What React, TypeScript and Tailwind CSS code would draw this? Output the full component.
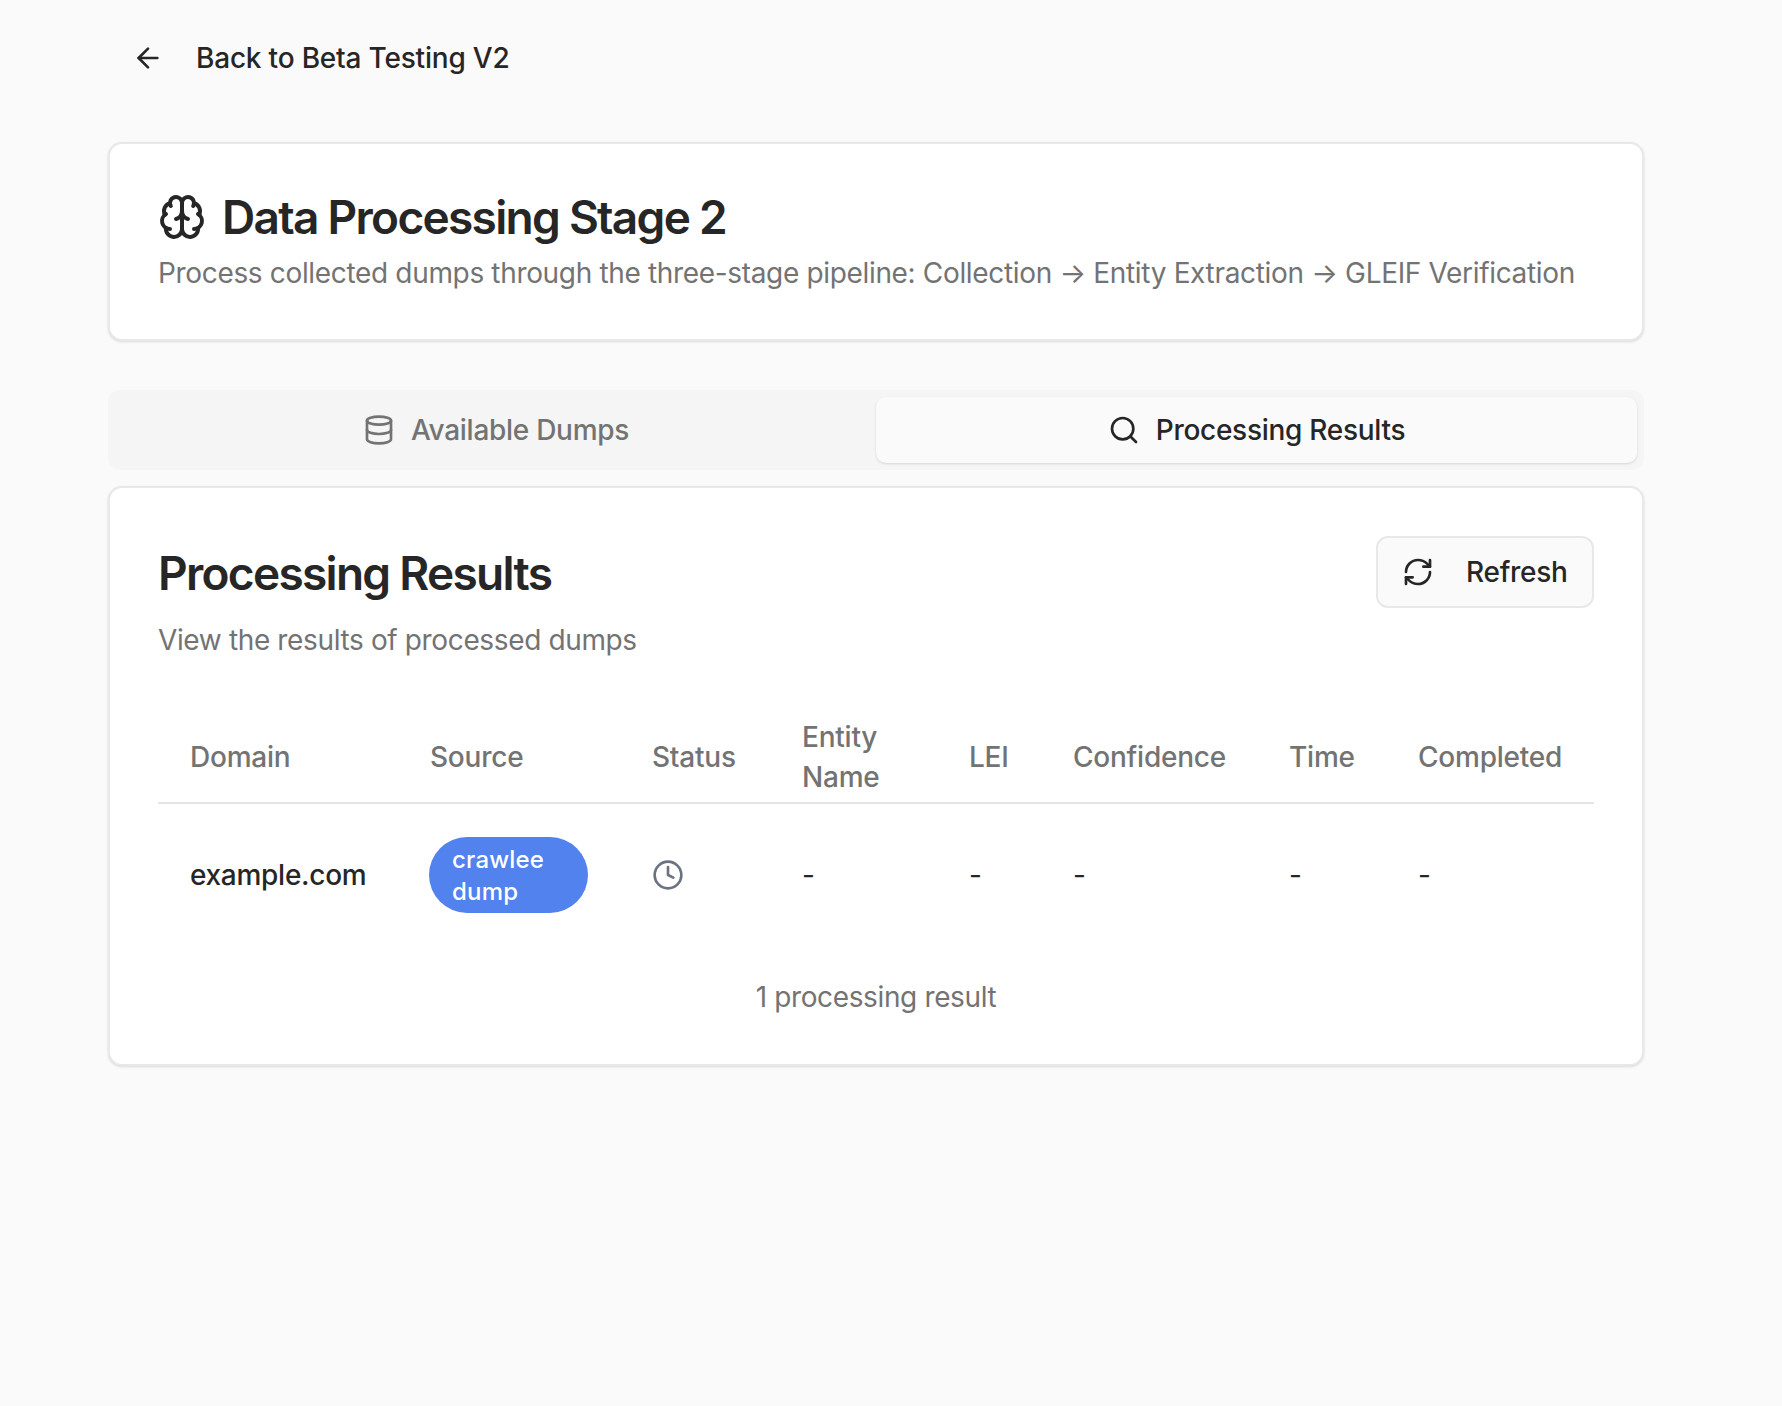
import { ArrowLeft, Brain, Clock, Database, RefreshCw, Search } from 'lucide-react'

const headers = ['Domain', 'Source', 'Status', 'Entity Name', 'LEI', 'Confidence', 'Time', 'Completed']
const widths = ['w-[240px]', 'w-[222px]', 'w-[150px]', 'w-[167px]', 'w-[104px]', 'w-[216px]', 'w-[129px]', 'w-[208px]']

const App = () => {
  return (
    <div className="min-h-[1406px] bg-[#fafafa] pl-[108px] pr-[138px] pt-[28px] font-['Inter',sans-serif] text-[#262626]">
      <a className="ml-[24px] flex h-[60px] items-center gap-[32px] text-[28px] font-medium tracking-[-0.007em]">
        <ArrowLeft className="h-[32px] w-[32px]" strokeWidth={2} />
        Back to Beta Testing V2
      </a>

      <div className="mt-[54px] h-[199px] rounded-[14px] border-2 border-[#e8e8e8] bg-white px-[48px] pt-[45px] shadow-sm">
        <div className="flex items-center gap-[16px]">
          <Brain className="h-[48px] w-[48px]" strokeWidth={2} />
          <h1 className="text-[46px] leading-[56px] font-semibold tracking-[-0.037em]">Data Processing Stage 2</h1>
        </div>
        <p className="mt-[6px] text-[28px] leading-[44px] tracking-[-0.012em] whitespace-nowrap text-[#737373]">
          Process collected dumps through the three-stage pipeline: Collection → Entity Extraction → GLEIF Verification
        </p>
      </div>

      <div className="mt-[49px] grid h-[80px] grid-cols-2 rounded-[12px] bg-[#f5f5f5] p-[7px]">
        <div className="flex items-center justify-center gap-[16px] pl-[1px] text-[28px] font-medium tracking-[-0.01em] text-[#737373]">
          <Database className="h-[32px] w-[32px]" />
          Available Dumps
        </div>
        <div className="flex items-center justify-center gap-[16px] rounded-[10px] bg-[#fafafa] text-[28px] font-medium tracking-[-0.01em] shadow-sm">
          <Search className="h-[32px] w-[32px]" />
          Processing Results
        </div>
      </div>

      <div className="mt-[16px] h-[580px] rounded-[14px] border-2 border-[#e8e8e8] bg-white px-[48px] pt-[48px] shadow-sm">
        <div className="flex items-start justify-between">
          <div>
            <h2 className="mt-[9px] text-[46px] leading-[56px] font-semibold tracking-[-0.037em]">Processing Results</h2>
            <p className="mt-[17px] text-[28px] leading-[44px] tracking-[-0.013em] text-[#737373]">View the results of processed dumps</p>
          </div>
          <button className="flex h-[72px] w-[218px] items-center gap-[32px] rounded-[12px] border-2 border-[#e8e8e8] bg-[#fafafa] pl-[24px] text-[28px] font-medium tracking-[-0.01em]">
            <RefreshCw className="h-[32px] w-[32px]" />
            Refresh
          </button>
        </div>

        <table className="mt-[49px] w-[1436px] table-fixed border-collapse">
          <colgroup>
            {widths.map((w) => (
              <col key={w} className={w} />
            ))}
          </colgroup>
          <thead>
            <tr className="h-[92px] border-b-2 border-[#e5e5e5]">
              {headers.map((h) => (
                <th key={h} className="px-[32px] text-left text-[28px] leading-[40px] font-medium tracking-[-0.008em] text-[#737373]">
                  {h}
                </th>
              ))}
            </tr>
          </thead>
          <tbody>
            <tr className="h-[142px] text-[28px] tracking-[-0.01em]">
              <td className="px-[32px] font-medium">example.com</td>
              <td className="px-[32px]">
                <span className="-ml-[1px] inline-block w-[159px] rounded-[38px] bg-[#5282ee] px-[23px] pt-[7px] pb-[5px] text-[24px] leading-[32px] font-medium tracking-[0.008em] text-white">
                  crawlee dump
                </span>
              </td>
              <td className="px-[32px]">
                <Clock className="h-[32px] w-[32px] text-[#6b7280]" />
              </td>
              <td className="px-[32px]">-</td>
              <td className="px-[32px]">-</td>
              <td className="px-[32px]">-</td>
              <td className="px-[32px]">-</td>
              <td className="px-[32px]">-</td>
            </tr>
          </tbody>
        </table>

        <p className="mt-[30px] text-center text-[28px] leading-[44px] tracking-[-0.013em] text-[#737373]">1 processing result</p>
      </div>
    </div>
  )
}

export default App
